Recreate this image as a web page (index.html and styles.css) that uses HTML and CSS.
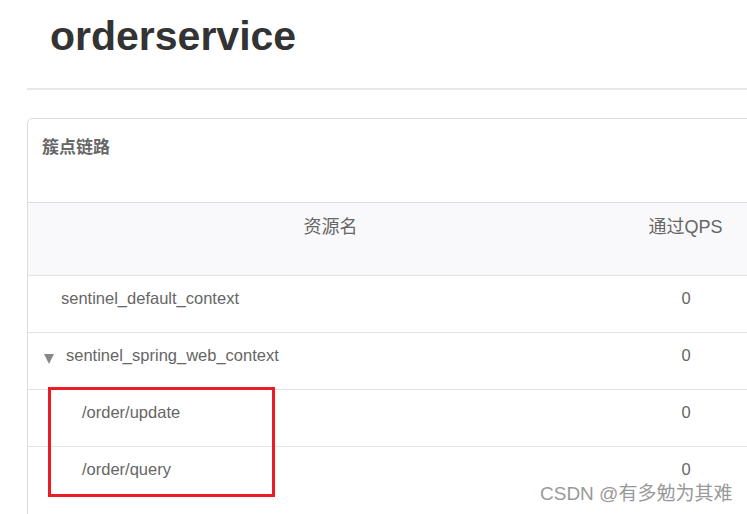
FILE: index.html
```html
<!DOCTYPE html>
<html lang="zh-CN">
<head>
<meta charset="utf-8">
<title>orderservice</title>
<link rel="stylesheet" href="styles.css">
</head>
<body>
<div class="page">
  <h1 class="app-title">orderservice</h1>
  <div class="divider"></div>
  <div class="card">
    <div class="card-header">簇点链路</div>
    <div class="table-wrap">
      <table class="tree-table">
        <colgroup>
          <col class="col-name">
          <col class="col-qps">
          <col class="col-rest">
        </colgroup>
        <thead>
          <tr>
            <th>资源名</th>
            <th>通过QPS</th>
            <th></th>
          </tr>
        </thead>
        <tbody>
          <tr>
            <td class="name lvl0">sentinel_default_context</td>
            <td class="num">0</td>
            <td></td>
          </tr>
          <tr>
            <td class="name lvl0 has-toggle"><span class="toggle"></span>sentinel_spring_web_context</td>
            <td class="num">0</td>
            <td></td>
          </tr>
          <tr>
            <td class="name lvl1">/order/update</td>
            <td class="num">0</td>
            <td></td>
          </tr>
          <tr>
            <td class="name lvl1">/order/query</td>
            <td class="num">0</td>
            <td></td>
          </tr>
        </tbody>
      </table>
      <div class="highlight"></div>
    </div>
  </div>
  <div class="watermark">CSDN @有多勉为其难</div>
</div>
</body>
</html>
```
FILE: styles.css
```css
html, body {
  margin: 0;
  padding: 0;
  background: #fff;
  overflow: hidden;
  height: 514px;
}
body {
  font-family: "Liberation Sans", Arial, "Noto Sans CJK SC", sans-serif;
  color: #666;
}
.page {
  position: relative;
  width: 747px;
  height: 514px;
  overflow: hidden;
}
.app-title {
  margin: 0;
  padding: 13px 0 0 50px;
  font-size: 41px;
  line-height: 46px;
  font-weight: bold;
  color: #333;
  height: 75px;
  box-sizing: border-box;
}
.divider {
  margin: 13px 0 0 27px;
  border-top: 2px solid #e8e8e8;
}
.card {
  margin: 28px 0 0 27px;
  width: 800px;
  min-height: 500px;
  border: 1px solid #ddd;
  border-radius: 5px;
  background: #fff;
}
.card-header {
  height: 83px;
  box-sizing: border-box;
  padding: 15px 0 0 14px;
  font-family: "Noto Sans CJK SC", sans-serif;
  font-weight: bold;
  font-size: 17px;
  line-height: 24px;
  color: #666;
}
.table-wrap {
  position: relative;
}
.tree-table {
  border-collapse: collapse;
  width: 100%;
  table-layout: fixed;
}
.col-name { width: 605px; }
.col-qps { width: 105px; }
.tree-table th {
  height: 73px;
  box-sizing: border-box;
  vertical-align: top;
  padding: 12px 0 0 0;
  background: #f9f9fb;
  border-top: 1px solid #ddd;
  border-bottom: 1px solid #e3e3e3;
  font-family: "Liberation Sans", "Noto Sans CJK SC", sans-serif;
  font-weight: normal;
  font-size: 18px;
  line-height: 24px;
  color: #666;
  text-align: center;
}
.tree-table td {
  height: 57px;
  box-sizing: border-box;
  vertical-align: top;
  padding: 12px 0 0 0;
  border-bottom: 1px solid #e3e3e3;
  font-size: 16.5px;
  line-height: 20px;
  color: #666;
}
.tree-table tbody tr:last-child td {
  border-bottom: none;
}
.tree-table td.num {
  text-align: center;
  padding-left: 1px;
}
.name.lvl0 { padding-left: 33px; }
.name.lvl0.has-toggle { padding-left: 16px; }
.name.lvl1 { padding-left: 54px; }
.toggle {
  display: inline-block;
  width: 0;
  height: 0;
  border-left: 5.5px solid transparent;
  border-right: 5.5px solid transparent;
  border-top: 10px solid #888;
  margin-right: 12px;
  vertical-align: -3px;
}
.highlight {
  position: absolute;
  left: 20px;
  top: 185px;
  width: 221px;
  height: 104px;
  border: 3.5px solid #ec1c24;
}
.watermark {
  position: absolute;
  left: 540px;
  top: 482px;
  font-family: "Liberation Sans", "Noto Sans CJK SC", sans-serif;
  font-size: 19px;
  line-height: 24px;
  color: #999;
  white-space: nowrap;
  text-shadow: 0 0 1px #fff;
}
```
